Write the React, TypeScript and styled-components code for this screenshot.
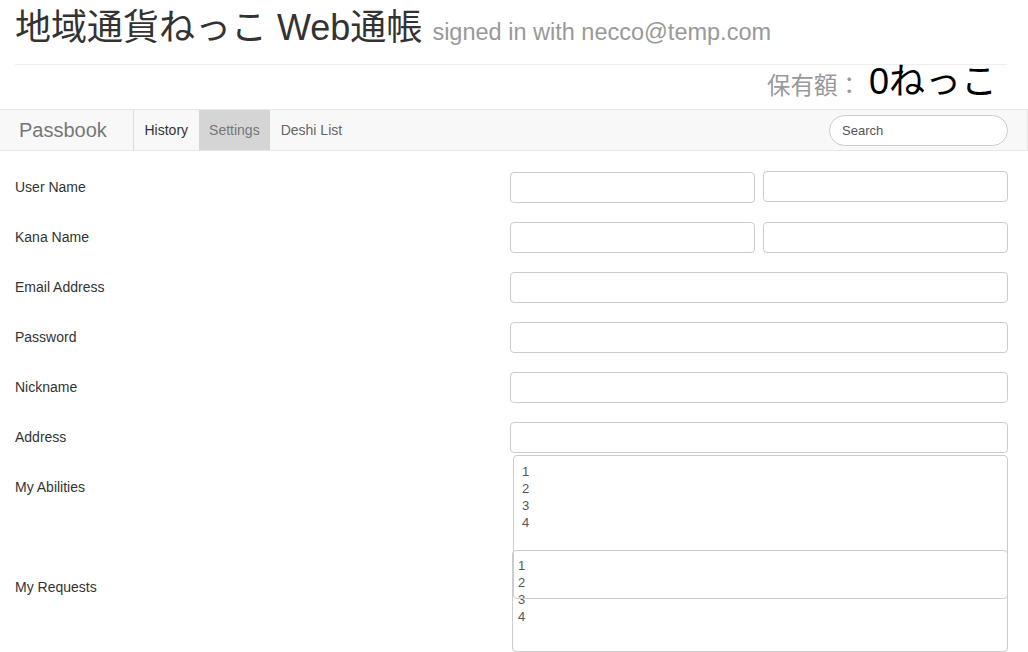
import React from "react";
import styled, { createGlobalStyle } from "styled-components";

const Global = createGlobalStyle`
  html, body { margin: 0; padding: 0; background: #fff; }
  body {
    font-family: "Liberation Sans", "Noto Sans CJK JP", sans-serif;
    color: #333;
    font-size: 14px;
  }
  * { box-sizing: border-box; }
`;

const Header = styled.header`
  padding: 0 21px 0 15px;
`;

const Title = styled.h1`
  margin: 8px 0 0;
  font-size: 36px;
  line-height: 40px;
  font-weight: 400;
  color: #333;
  white-space: nowrap;
`;

const Sub = styled.small`
  font-size: 23.5px;
  color: #999;
`;

const Rule = styled.hr`
  margin: 12px 0 0;
  border: 0;
  border-top: 1px solid #eee;
`;

const Balance = styled.div`
  display: flex;
  justify-content: flex-end;
  align-items: baseline;
  height: 33px;
  line-height: 33px;
  margin-bottom: 11px;
  padding-right: 10px;
`;

const BalanceLabel = styled.span`
  font-size: 23.5px;
  color: #999;
  margin-right: 8px;
`;

const BalanceValue = styled.span`
  font-size: 36px;
  color: #000;
`;

const Navbar = styled.nav`
  display: flex;
  align-items: center;
  height: 42px;
  background: #f8f8f8;
  border-top: 1px solid #e7e7e7;
  border-bottom: 1px solid #e7e7e7;
  border-right: 1px solid #e7e7e7;
`;

const Brand = styled.div`
  width: 133px;
  padding-left: 19px;
  font-size: 20px;
  line-height: 40px;
  color: #777;
`;

const NavList = styled.ul`
  display: flex;
  margin: 0;
  padding: 0;
  list-style: none;
  border-left: 1px solid #ddd;
  height: 40px;
`;

const NavItem = styled.li<{ $active?: boolean; $tone: string }>`
  padding: 0 10.5px;
  line-height: 40px;
  font-size: 14px;
  color: ${(p) => p.$tone};
  background: ${(p) => (p.$active ? "#d5d5d5" : "transparent")};
`;

const Search = styled.input`
  margin-left: auto;
  margin-right: 19px;
  width: 179px;
  height: 31px;
  border: 1px solid #ccc;
  border-radius: 16px;
  padding: 0 12px;
  font-family: inherit;
  font-size: 13px;
  background: #fff;
  outline: none;
  &::placeholder { color: #555; }
`;

const Form = styled.div`
  padding: 11px 20px 0 15px;
`;

const Row = styled.div<{ $tall?: boolean }>`
  display: grid;
  grid-template-columns: 495px 1fr;
  align-items: ${(p) => (p.$tall ? "start" : "center")};
  height: ${(p) => (p.$tall ? 100 : 50)}px;
`;

const Label = styled.label`
  font-size: 14px;
  line-height: 50px;
  color: #333;
`;

const Pair = styled.div`
  display: grid;
  grid-template-columns: 1fr 1fr;
  gap: 8px;
`;

const Input = styled.input<{ $lift?: boolean }>`
  display: block;
  width: 100%;
  height: 31px;
  border: 1px solid #ccc;
  border-radius: 4px;
  background: #fff;
  margin-top: ${(p) => (p.$lift ? "-1px" : "0")};
  outline: none;
`;

const ListBox = styled.div<{ $top: number; $left: number; $h: number; $padTop: number; $padLeft: number; $over?: boolean }>`
  position: relative;
  z-index: ${(p) => (p.$over ? 1 : 0)};
  margin-top: ${(p) => p.$top}px;
  margin-left: ${(p) => p.$left}px;
  height: ${(p) => p.$h}px;
  border: 1px solid #ccc;
  border-radius: 4px;
  background: ${(p) => (p.$over ? "transparent" : "#fff")};
  padding: ${(p) => p.$padTop}px 0 0 ${(p) => p.$padLeft}px;
`;

const Option = styled.div`
  font-size: 13px;
  line-height: 17px;
  color: #555;
`;

const items = ["1", "2", "3", "4"];

export default function App() {
  return (
    <>
      <Global />
      <Header>
        <Title>
          地域通貨ねっこ Web通帳 <Sub>signed in with necco@temp.com</Sub>
        </Title>
        <Rule />
        <Balance>
          <BalanceLabel>保有額：</BalanceLabel>
          <BalanceValue>0ねっこ</BalanceValue>
        </Balance>
      </Header>
      <Navbar>
        <Brand>Passbook</Brand>
        <NavList>
          <NavItem $tone="#333">History</NavItem>
          <NavItem $tone="#777" $active>Settings</NavItem>
          <NavItem $tone="#666">Deshi List</NavItem>
        </NavList>
        <Search placeholder="Search" />
      </Navbar>
      <Form>
        <Row>
          <Label>User Name</Label>
          <Pair>
            <Input />
            <Input $lift />
          </Pair>
        </Row>
        <Row>
          <Label>Kana Name</Label>
          <Pair>
            <Input />
            <Input />
          </Pair>
        </Row>
        <Row>
          <Label>Email Address</Label>
          <Input />
        </Row>
        <Row>
          <Label>Password</Label>
          <Input />
        </Row>
        <Row>
          <Label>Nickname</Label>
          <Input />
        </Row>
        <Row>
          <Label>Address</Label>
          <Input />
        </Row>
        <Row $tall>
          <Label>My Abilities</Label>
          <ListBox $top={-7} $left={3} $h={144} $padTop={7} $padLeft={8} $over>
            {items.map((i) => (
              <Option key={i}>{i}</Option>
            ))}
          </ListBox>
        </Row>
        <Row $tall>
          <Label>My Requests</Label>
          <ListBox $top={-12} $left={2} $h={102} $padTop={6} $padLeft={5}>
            {items.map((i) => (
              <Option key={i}>{i}</Option>
            ))}
          </ListBox>
        </Row>
      </Form>
    </>
  );
}
